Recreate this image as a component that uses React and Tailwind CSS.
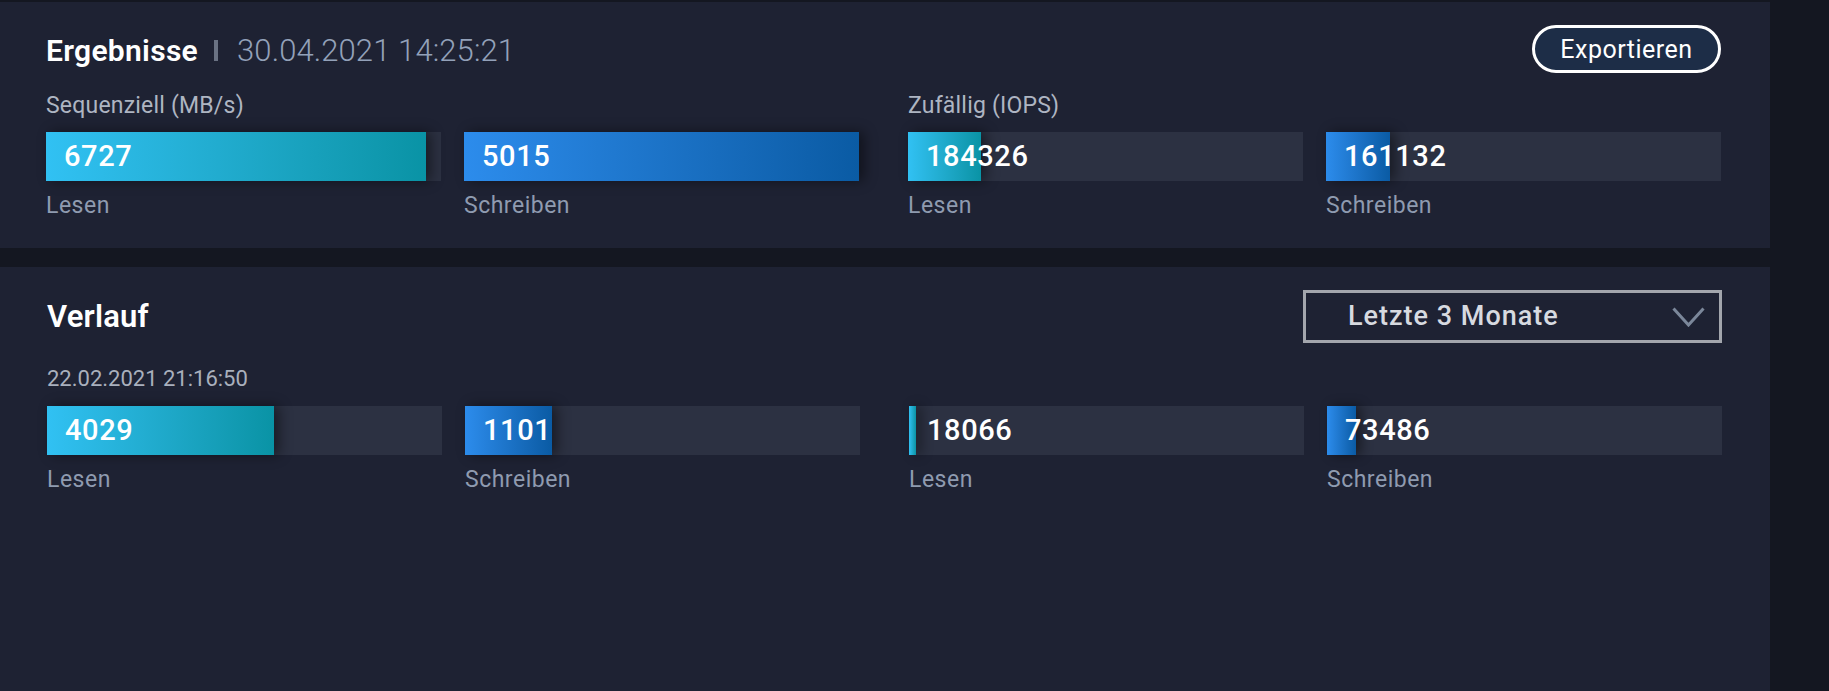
import React from "react";

const READ = "bg-linear-to-r from-[#31c1f3] to-[#0993a5]";
const WRITE = "bg-linear-to-r from-[#2c8cec] to-[#0a5ba4]";

function Bar({ value, max, kind, label }) {
  const pct = Math.min(1, value / max) * 100;
  return (
    <div className="flex flex-col">
      <div className="relative h-[49px] bg-[#2c3142]">
        <div
          className={`h-full ${kind === "read" ? READ : WRITE} shadow-[5px_0_12px_rgba(0,0,0,0.45)]`}
          style={{ width: `${pct}%` }}
        />
        <div className="absolute inset-0 flex items-center pl-[18px] text-[29px] font-medium tracking-[0.6px] text-white leading-none">
          {value}
        </div>
      </div>
      <div className="mt-[12px] h-[26px] leading-[26px] text-[23px] tracking-[0.5px] text-[#8f9bb0]">
        {label}
      </div>
    </div>
  );
}

function Group({ title, children }) {
  return (
    <div className="flex-1 flex flex-col">
      {title !== undefined && (
        <div className="h-[26px] leading-[26px] text-[23px] tracking-[0.2px] text-[#aeb5c2] mt-[1px] mb-[13px]">{title}</div>
      )}
      <div className="grid grid-cols-2 gap-[23px]">{children}</div>
    </div>
  );
}

export default function App() {
  return (
    <div className="w-[1829px] h-[691px] overflow-hidden bg-[#141721] pt-[2px] font-[Roboto,sans-serif]">
      {/* Ergebnisse panel */}
      <div className="w-[1770px] h-[246px] bg-[#1e2233] pl-[46px] pr-[49px] pt-[23px]">
        <div className="flex items-center justify-between h-[48px]">
          <div className="flex items-center pt-[3px]">
            <span className="text-[30px] font-semibold tracking-[0.3px] text-white leading-none">Ergebnisse</span>
            <span className="ml-[16px] w-[4px] h-[21px] bg-[#6a7283]" />
            <span className="ml-[19px] text-[31px] font-light tracking-[0.1px] text-[#93a1b9] leading-none">
              30.04.2021 14:25:21
            </span>
          </div>
          <button className="w-[189px] h-[48px] rounded-full border-[3px] border-white bg-[#1d2d47] text-[25px] tracking-[0.5px] text-white leading-none">
            Exportieren
          </button>
        </div>
        <div className="mt-[19px] flex gap-[49px]">
          <Group title="Sequenziell (MB/s)">
            <Bar value={6727} max={7000} kind="read" label="Lesen" />
            <Bar value={5015} max={5000} kind="write" label="Schreiben" />
          </Group>
          <Group title="Zufällig (IOPS)">
            <Bar value={184326} max={1000000} kind="read" label="Lesen" />
            <Bar value={161132} max={1000000} kind="write" label="Schreiben" />
          </Group>
        </div>
      </div>

      {/* Verlauf panel */}
      <div className="mt-[19px] w-[1770px] h-[424px] bg-[#1e2233] pl-[47px] pr-[48px] pt-[23px]">
        <div className="flex items-center justify-between h-[53px]">
          <span className="text-[31px] font-semibold tracking-[0.2px] text-white leading-none">Verlauf</span>
          <div className="w-[419px] h-[53px] border-[3px] border-[#a3a6ad] flex items-center justify-between pl-[42px] pr-[14px]">
            <span className="text-[27px] font-medium tracking-[1px] text-[#d7dae0] leading-none">
              Letzte 3 Monate
            </span>
            <svg width="33" height="20" viewBox="0 0 33 20" fill="none">
              <polyline points="1.5,1.5 16.5,18 31.5,1.5" stroke="#7b879a" strokeWidth="3" />
            </svg>
          </div>
        </div>
        <div className="mt-[23px] h-[26px] leading-[26px] text-[22px] text-[#a9b0bd]">
          22.02.2021 21:16:50
        </div>
        <div className="mt-[14px] flex gap-[49px]">
          <Group>
            <Bar value={4029} max={7000} kind="read" label="Lesen" />
            <Bar value={1101} max={5000} kind="write" label="Schreiben" />
          </Group>
          <Group>
            <Bar value={18066} max={1000000} kind="read" label="Lesen" />
            <Bar value={73486} max={1000000} kind="write" label="Schreiben" />
          </Group>
        </div>
      </div>
    </div>
  );
}
